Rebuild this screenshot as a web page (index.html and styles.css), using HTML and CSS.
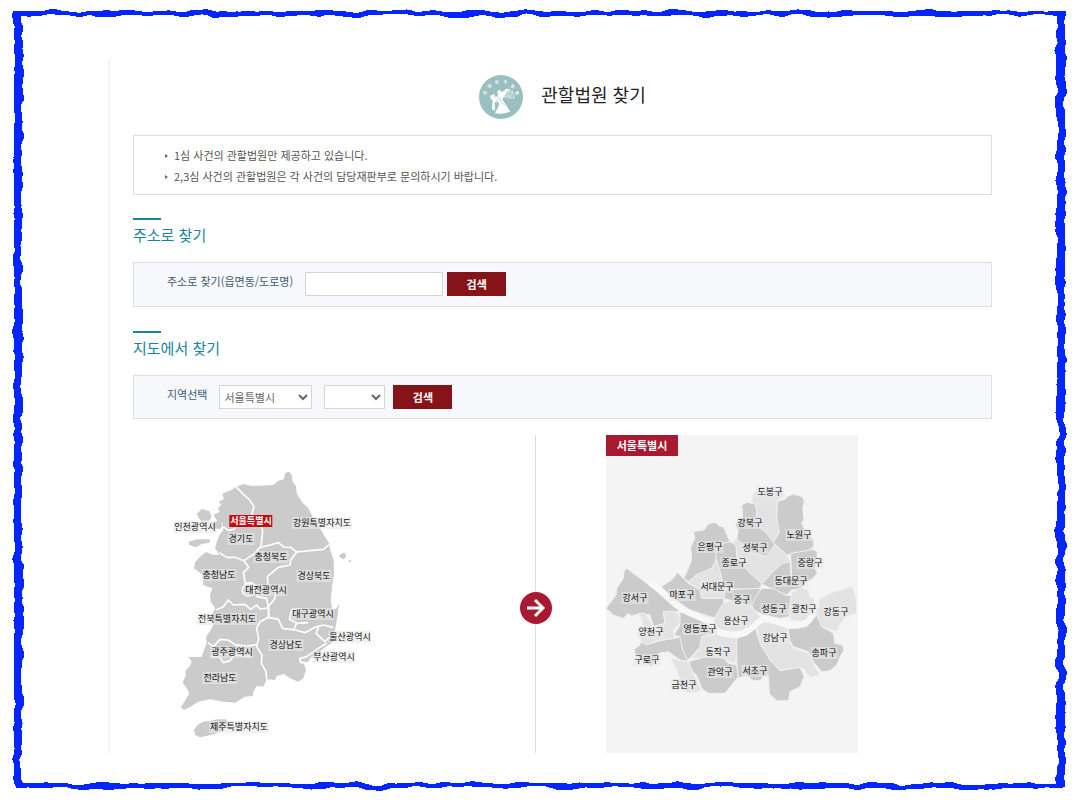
FILE: index.html
```html
<!DOCTYPE html>
<html lang="ko">

<head>
  <meta charset="utf-8">
  <title>관할법원 찾기</title>
  <link rel="stylesheet" href="styles.css">
</head>

<body>
  <svg class="defs" width="0" height="0" aria-hidden="true">
    <filter id="rough" x="-2%" y="-2%" width="104%" height="104%" color-interpolation-filters="sRGB">
      <feTurbulence type="fractalNoise" baseFrequency="0.04 0.07" numOctaves="2" seed="4" />
      <feDisplacementMap in="SourceGraphic" scale="8" xChannelSelector="R" yChannelSelector="G" />
      <feGaussianBlur stdDeviation="0.5" />
    </filter>
  </svg>

  <div class="frame">
    <main class="page">
      <header class="title">
        <svg class="logo" viewBox="0 0 132 132" aria-hidden="true">
          <circle cx="66" cy="66" r="66" fill="#9abfc0" />
          <path id="arc" d="M20 70 A46 46 0 0 1 112 70" fill="none" />
          <text class="logo-text" text-anchor="middle"><textPath href="#arc" startOffset="50%">대&#8195;한&#8195;민&#8195;국&#8195;법&#8195;원</textPath></text>
          <path fill="#fff" d="M34 62 L46 57 L49 67 L57 62 L55 50 Q58 43 64 46 L69 52 L82 41 L97 43 L84 48 L76 62 L70 74 L77 83 L94 110 Q71 119 48 115 L60 90 L58 81 L47 82 L48 107 L39 103 L41 76 L35 73 Z" />
          <path fill="none" stroke="#9abfc0" stroke-width="2" d="M56 64 Q64 82 78 91 M50 73 L59 81" />
          <path fill="none" stroke="#fff" stroke-width="2" d="M90 43 V73 M79 52 L101 48 M82 52 L76 66 H87 Z M100 49 L94 69 H106 Z" />
        </svg>
        <h1>관할법원 찾기</h1>
      </header>

      <ul class="notice">
        <li>1심 사건의 관할법원만 제공하고 있습니다.</li>
        <li>2,3심 사건의 관할법원은 각 사건의 담당재판부로 문의하시기 바랍니다.</li>
      </ul>

      <h2>주소로 찾기</h2>
      <form class="search">
        <label for="address">주소로 찾기(읍면동/도로명)</label>
        <input type="text" id="address" name="address">
        <button type="button">검색</button>
      </form>

      <h2>지도에서 찾기</h2>
      <form class="search region">
        <label for="sido">지역선택</label>
        <select id="sido" name="sido">
          <option>서울특별시</option>
        </select>
        <select id="sigungu" name="sigungu" aria-label="시군구">
          <option></option>
        </select>
        <button type="button">검색</button>
      </form>

      <div class="maps">
        <section class="country">
          <div class="map" id="korea">
            <svg viewBox="0 0 660 840" aria-hidden="true">
              <g fill="#cbcbcb">
                <path d="M188 100 L210 92 L228 80 L250 72 L275 78 L340 75 L355 62 L372 58 L376 38 L388 35 L395 45 L398 65 L408 78 L410 100 L425 125 L445 145 L462 180 L480 205 L495 230 L507 250 L511 270 L521 300 L522 340 L516 380 L512 420 L517 450 L530 445 L537 430 L533 465 L526 505 L515 550 L500 558 L470 582 L450 595 L445 608 L430 605 L438 630 L430 655 L415 665 L390 655 L372 642 L350 648 L345 660 L320 658 L310 680 L290 678 L280 695 L278 708 L255 710 L225 728 L190 725 L175 722 L150 718 L115 725 L95 738 L72 750 L62 742 L75 722 L88 700 L78 682 L68 668 L78 645 L76 632 L90 618 L95 604 L85 592 L125 590 L130 575 L140 550 L138 530 L152 510 L160 495 L155 465 L166 445 L152 425 L150 405 L157 385 L130 375 L128 345 L102 325 L106 306 L120 290 L138 276 L158 284 L178 285 L165 264 L172 240 L180 222 L190 210 L188 190 L170 180 L160 165 L180 155 L173 145 L184 135 L176 126 L191 118 Z" />
                <path d="M110 162 L125 147 L148 153 L155 170 L148 182 L122 182 Z M155 188 L178 180 L188 195 L180 208 L158 203 Z M86 245 L110 238 L150 238 L148 248 L125 252 L108 262 L88 255 Z" />
                <path d="M538 285 L553 277 L559 290 L551 298 L540 292 Z M566 300 L574 302 L573 307 L566 305 Z" />
                <path d="M102 810 L112 795 L130 785 L150 782 L175 778 L197 778 L205 788 L192 808 L172 820 L148 826 L120 832 L106 826 Z" />
              </g>
              <g fill="none" stroke="#fff" stroke-width="5" stroke-linejoin="round">
                <path d="M228 80 L250 103 L268 118 L282 140 L275 165 L300 185 L308 212 L303 260" />
                <path d="M507 254 L490 268 L450 272 L410 276 L392 262 L372 261 L355 248 L330 255 L300 262 L284 280 L252 302 L225 292 L200 292 L178 278" />
                <path d="M190 200 L205 212 L222 208 L230 196" />
                <path d="M252 302 L266 322 L250 338 L256 370 L275 368 L290 380 L290 410 L320 415 L326 450 M410 276 L392 300 L390 315 L355 322 L322 350 L324 378 L348 395 L345 415 L325 440 L326 472" />
                <circle cx="265" cy="390" r="18" />
                <path d="M168 450 L190 440 L205 420 L220 435 L255 433 L272 448 L290 435 L300 447 L326 444 L326 472 L355 478 L368 505 L405 510 L435 518 L465 502 L490 495 L520 503" />
                <path d="M326 472 L300 485 L290 505 L296 535 L290 560 L306 585 L304 610 L318 635 L320 658 M144 548 L160 560 L180 538 L205 540 L225 554 L260 558 L292 553" />
                <path d="M165 562 L155 590 L180 592 L190 608 L210 602 L222 585 L275 590 M400 510 L410 490 L388 478 L395 450 L420 445 M410 490 L445 488 M476 502 L468 520 L495 545 L510 530 M500 550 L475 565 L440 590 L420 595 L422 608 L450 608" />
              </g>
            </svg>
          </div>
        </section>

        <svg class="arrow" viewBox="0 0 32 32" aria-hidden="true">
          <circle cx="16" cy="16" r="16" fill="#a71a2f" />
          <path d="M7 16 H23 M15 8 L23 16 L15 24" fill="none" stroke="#fff" stroke-width="3" />
        </svg>

        <section class="city">
          <h3>서울특별시</h3>
          <div class="map" id="seoul">
            <svg viewBox="18 15 756 954" aria-hidden="true">
              <g class="districts">
                <path class="light" d="M458 190 L480 178 L545 180 L550 195 L532 215 L530 260 L540 300 L520 338 L495 305 L465 295 L470 240 L455 215 Z" />
                <path d="M425 225 L440 217 L465 222 L470 240 L468 285 L495 305 L525 342 L522 358 L500 380 L460 370 L410 330 L415 300 L405 285 L415 270 L428 260 Z" />
                <path d="M532 215 L555 207 L565 198 L580 192 L606 200 L613 212 L608 235 L612 270 L604 278 L615 300 L640 330 L642 348 L625 362 L560 375 L520 338 L538 305 L530 260 Z" />
                <path class="light" d="M395 335 L410 328 L460 370 L500 380 L525 342 L560 375 L570 395 L545 405 L515 430 L485 460 L450 430 L430 405 L412 400 L408 345 Z" />
                <path d="M280 305 L312 300 L325 282 L345 277 L358 288 L370 290 L390 335 L355 350 L352 385 L335 415 L290 435 L265 455 L250 445 L258 432 L275 390 L272 350 L285 325 Z" />
                <path d="M352 345 L390 335 L408 345 L410 385 L430 405 L450 430 L485 460 L480 475 L420 478 L370 475 L362 430 L345 400 Z" />
                <path d="M572 370 L620 362 L638 358 L652 365 L650 400 L645 415 L652 430 L635 448 L620 455 L575 445 Z" />
                <path d="M485 462 L515 430 L545 402 L570 395 L572 440 L620 455 L605 475 L575 480 L560 495 L520 478 Z" />
                <path class="light" d="M265 455 L290 435 L335 415 L350 388 L362 430 L370 475 L385 490 L370 505 L305 505 L300 480 Z" />
                <path d="M183 470 L215 450 L233 428 L265 460 L300 480 L305 505 L370 505 L372 520 L350 565 L330 560 L270 540 L220 505 Z" />
                <path d="M18 535 L48 495 L50 475 L70 445 L72 425 L80 415 L100 430 L180 490 L240 545 L190 545 L195 580 L160 590 L150 555 L120 550 L95 558 L85 550 L70 565 L40 555 Z" />
                <path class="light" d="M118 550 L135 550 L160 590 L195 580 L190 545 L225 543 L242 560 L240 580 L220 600 L222 625 L160 635 L140 650 L120 630 L130 590 Z" />
                <path d="M103 658 L120 645 L122 635 L140 645 L180 632 L225 625 L245 620 L250 660 L265 695 L240 690 L205 665 L175 670 L155 710 L130 695 L105 670 Z" />
                <path d="M240 545 L270 555 L330 585 L360 610 L320 615 L300 650 L275 680 L262 690 L248 660 L240 620 L222 615 L240 585 Z" />
                <path class="light" d="M305 620 L360 612 L410 625 L412 670 L405 700 L375 690 L320 690 L275 685 L300 650 Z" />
                <path d="M265 695 L320 680 L372 685 L385 700 L410 705 L415 740 L395 765 L375 790 L325 790 L305 775 L292 740 L275 720 Z" />
                <path class="light" d="M212 682 L240 692 L265 695 L275 720 L290 750 L302 778 L290 787 L258 787 L245 755 L225 710 Z" />
                <path class="light" d="M370 520 L395 510 L440 520 L465 540 L480 560 L455 590 L410 605 L360 600 L340 580 L345 560 Z" />
                <path d="M375 480 L430 477 L480 475 L485 490 L465 510 L455 530 L420 520 L372 505 Z" />
                <path d="M485 475 L520 475 L560 497 L575 495 L570 560 L540 565 L490 555 L462 540 L455 525 L465 505 Z" />
                <path class="light" d="M575 490 L600 472 L625 480 L630 500 L642 508 L645 540 L640 560 L610 575 L575 570 L565 550 Z" />
                <path class="light" d="M655 510 L690 490 L755 470 L768 500 L770 550 L735 560 L725 575 L710 605 L665 590 L650 560 Z" />
                <path class="light" d="M468 590 L490 575 L560 590 L570 640 L580 655 L625 670 L640 700 L660 735 L630 742 L610 715 L540 720 L510 690 L480 640 Z" />
                <path d="M410 625 L440 615 L465 590 L480 640 L510 690 L540 722 L600 712 L612 740 L600 770 L570 785 L565 812 L530 812 L508 792 L505 735 L490 740 L480 752 L460 752 L440 735 L415 745 L410 690 Z" />
                <path d="M565 595 L620 590 L650 555 L665 590 L700 610 L705 640 L728 645 L732 660 L720 680 L710 705 L690 722 L665 725 L640 695 L625 665 L580 650 L568 630 Z" />
              </g>
              <path class="river" d="M150 458 C190 485 210 515 250 540 C290 563 310 560 335 585 C355 615 395 620 430 610 C460 600 470 570 500 565 C530 570 560 595 600 585 C630 580 640 555 650 515" />
            </svg>
          </div>
        </section>
      </div>
    </main>
  </div>
  <script src="map.js"></script>
</body>

</html>
```
FILE: styles.css
```css
* {
  box-sizing: border-box;
}

body {
  margin: 0;
  background: #fff;
  color: #333;
  font-family: "Noto Sans CJK KR", sans-serif;
  font-size: 11px;
}

h1,
h2,
h3 {
  margin: 0;
  font-weight: normal;
}

.defs {
  position: absolute;
}

.frame {
  position: relative;
  min-height: 100vh;
  padding: 59px 88px 47px 108px;
}

/* hand drawn border round the page */
.frame::before {
  content: "";
  position: absolute;
  top: 11px;
  right: 15px;
  bottom: 12px;
  left: 14px;
  border: solid #0325ff;
  border-width: 5px 8px;
  filter: url(#rough);
  pointer-events: none;
}

.page {
  padding: 16px 0 0 23px;
  border-left: 2px solid #f5f5f5;
}

.title {
  display: flex;
  align-items: center;
  justify-content: center;
  gap: 18px;
  height: 44px;
}

.title h1 {
  color: #222;
  font-size: 18px;
  line-height: 24px;
  padding-bottom: 6px;
}

.logo {
  width: 44px;
  height: 44px;
}

.logo-text {
  fill: #fff;
  font-size: 12px;
  font-weight: bold;
}

.notice {
  margin: 16px 0 0;
  padding: 9px 39px 7px;
  border: 1px solid #dedee0;
  list-style: none;
  line-height: 21px;
  color: #555;
}

.notice li {
  display: flex;
  align-items: center;
  height: 21px;
}

.notice li::before {
  content: "";
  margin: 0 6px 0 -8px;
  border: 2px solid transparent;
  border-left: 3px solid #666;
  border-right: 0;
}

h2 {
  margin: 23px 0 12px;
  color: #16869a;
  font-size: 15px;
  line-height: 30px;
}

h2::before {
  content: "";
  display: block;
  width: 28px;
  height: 2px;
  background: #16869a;
}

.search {
  display: flex;
  align-items: flex-start;
  padding: 9px 33px 10px;
  border: 1px solid #dcdee4;
  background: #f7f8fc;
}

.search + h2 {
  margin-top: 24px;
}

.search label {
  margin-right: 12px;
  color: #405a72;
  line-height: 18px;
}

.search input,
.search select {
  height: 24px;
  border: 1px solid #d5d5d8;
  border-radius: 0;
  background: #fff;
  color: #666;
  font: inherit;
}

.search input {
  width: 138px;
  margin-right: 4px;
}

.search select {
  padding: 0;
}

#sido {
  width: 93px;
  margin-right: 12px;
}

#sigungu {
  width: 61px;
  margin-right: 8px;
}

.search button {
  width: 59px;
  height: 24px;
  padding: 0;
  border: 0;
  background: #851317;
  color: #fff;
  font: inherit;
  font-weight: bold;
  cursor: pointer;
}

.region {
  padding-bottom: 9px;
}

.maps {
  display: flex;
  margin-top: 16px;
}

.country {
  width: 403px;
  padding: 25px 0 0 27px;
  border-right: 1px solid #ddd;
}

.arrow {
  width: 32px;
  height: 32px;
  margin: 0 0 129px -16px;
  align-self: flex-end;
}

.city {
  position: relative;
  width: 252px;
  margin-left: 54px;
  background: #f4f4f4;
}

.city h3 {
  position: absolute;
  top: 0;
  left: 0;
  width: 72px;
  background: #a71a2f;
  color: #fff;
  font-size: 11px;
  font-weight: bold;
  line-height: 21px;
  text-align: center;
}

.map {
  position: relative;
}

.map svg {
  display: block;
  width: 100%;
}

#korea {
  width: 220px;
  padding-bottom: 13px;
}

.districts {
  fill: #cbcbcb;
  stroke: #f0f0f0;
  stroke-width: 3px;
  stroke-linejoin: round;
}

.districts .light {
  fill: #e3e3e3;
}

.river {
  fill: none;
  stroke: #f8f8f8;
  stroke-width: 18px;
}

.map a {
  position: absolute;
  transform: translate(-50%, -50%);
  padding: 0 1px;
  background: rgba(232, 232, 232, 0.6);
  color: #111;
  font-size: 9px;
  line-height: 12px;
  white-space: nowrap;
  text-decoration: none;
}

#korea a.on {
  background: #c20d12;
  color: #fff;
  font-weight: bold;
}
```
FILE: map.js
```js
// name, center x, center y
var korea = [
  ["인천광역시", 35, 67],
  ["서울특별시", 91, 61],
  ["강원특별자치도", 162, 63],
  ["경기도", 81, 79],
  ["충청북도", 111, 97],
  ["충청남도", 59, 115],
  ["경상북도", 154, 116],
  ["대전광역시", 106, 130],
  ["대구광역시", 153, 154],
  ["전북특별자치도", 67, 159],
  ["울산광역시", 190, 177],
  ["경상남도", 126, 185],
  ["광주광역시", 72, 192],
  ["부산광역시", 174, 197],
  ["전라남도", 60, 218],
  ["제주특별자치도", 79, 267]
];

var seoul = [
  ["도봉구", 164, 57],
  ["강북구", 144, 88],
  ["노원구", 193, 100],
  ["은평구", 104, 112],
  ["성북구", 149, 113],
  ["종로구", 128, 128],
  ["중랑구", 204, 128],
  ["동대문구", 185, 146],
  ["서대문구", 111, 152],
  ["마포구", 76, 160],
  ["강서구", 29, 163],
  ["중구", 136, 165],
  ["성동구", 168, 174],
  ["광진구", 198, 174],
  ["강동구", 230, 177],
  ["용산구", 130, 186],
  ["영등포구", 94, 194],
  ["양천구", 45, 197],
  ["강남구", 169, 203],
  ["동작구", 112, 217],
  ["송파구", 218, 218],
  ["구로구", 41, 225],
  ["관악구", 114, 237],
  ["서초구", 149, 236],
  ["금천구", 78, 250]
];

function addLabels(id, list) {
  var map = document.getElementById(id);
  list.forEach(function (item) {
    var a = document.createElement("a");
    a.href = "#";
    a.textContent = item[0];
    a.style.left = item[1] + "px";
    a.style.top = item[2] + "px";
    if (item[0] == "서울특별시") a.className = "on";
    map.appendChild(a);
  });
}

addLabels("korea", korea);
addLabels("seoul", seoul);
```
